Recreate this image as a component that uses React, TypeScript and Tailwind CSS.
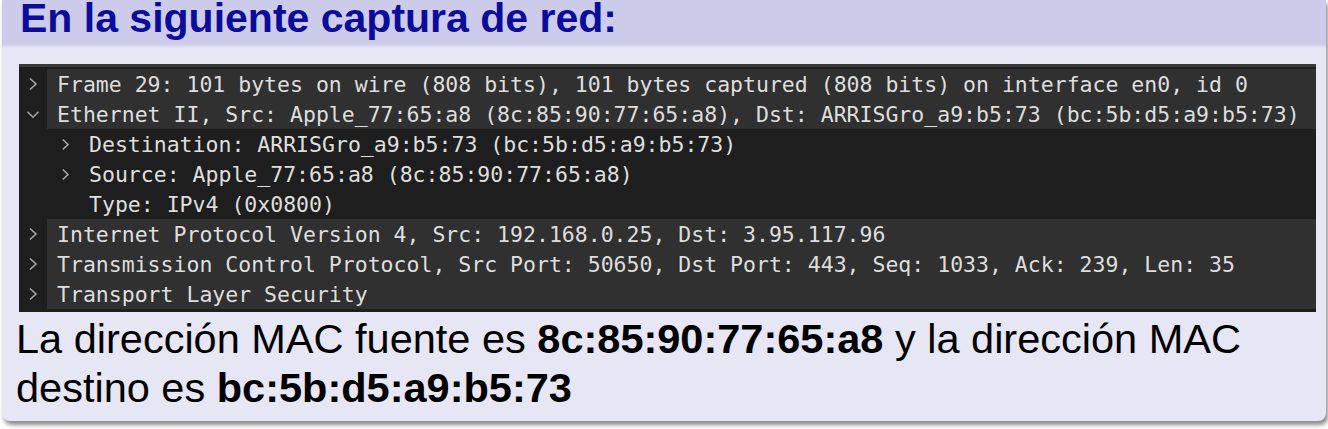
import React from "react";

const mono = { fontFamily: '"DejaVu Sans Mono", "Liberation Mono", monospace' };

function Right({ small = false }: { small?: boolean }) {
  return small ? (
    <svg width="9" height="13" viewBox="0 0 9 13" className="block">
      <path d="M1.8 1.5 L7 6.5 L1.8 11.5" stroke="#a6a6a6" strokeWidth="1.6" fill="none" />
    </svg>
  ) : (
    <svg width="10" height="14" viewBox="0 0 10 14" className="block">
      <path d="M2 1.5 L8 7 L2 12.5" stroke="#a6a6a6" strokeWidth="1.6" fill="none" />
    </svg>
  );
}

function Down() {
  return (
    <svg width="14" height="9" viewBox="0 0 14 9" className="block">
      <path d="M1.5 1.8 L7 7.2 L12.5 1.8" stroke="#a6a6a6" strokeWidth="1.6" fill="none" />
    </svg>
  );
}

function TopRow({ text, open = false }: { text: string; open?: boolean }) {
  return (
    <div className="flex h-[30px]">
      <div className="w-[28px] bg-[#1e1e1e] flex items-center justify-center">
        {open ? <Down /> : <Right />}
      </div>
      <div className="flex-1 bg-[#303030] pl-[10px] flex items-center">
        <span className="text-[21.5px] leading-[27px] text-[#dedede] whitespace-pre" style={mono}>
          {text}
        </span>
      </div>
    </div>
  );
}

function SubRow({ text, arrow = true }: { text: string; arrow?: boolean }) {
  return (
    <div className="flex h-[30px] items-center bg-[#1e1e1e] pl-[42px]">
      <div className="w-[9px]">{arrow ? <Right small /> : null}</div>
      <span className="ml-[19px] text-[21.5px] leading-[27px] text-[#dedede] whitespace-pre" style={mono}>
        {text}
      </span>
    </div>
  );
}

export default function App() {
  return (
    <div className="w-[1328px] h-[429px] bg-white overflow-hidden">
      <div className="ml-[2px] mr-[2px] rounded-b-[8px] bg-[#e6e6f4] shadow-[2px_4px_4px_rgba(0,0,0,0.45)]">
        <div className="h-[44px] bg-[#ccccea] pl-[18px]">
          <div
            className="text-[41px] leading-[36px] font-bold text-[#0c0c9c]"
            style={{ fontFamily: '"Liberation Sans", Arial, sans-serif' }}
          >
            En la siguiente captura de red:
          </div>
        </div>
        <div className="h-[4px] bg-gradient-to-b from-[#ccccea] to-[#e6e6f4]" />
        <div className="pt-[16px] pb-[9px]">
          <div className="ml-[17px] w-[1297px] bg-[#1e1e1e] border-t-[3px] border-[#3a3a3a] pt-[2px] pb-[3px]">
            <TopRow text="Frame 29: 101 bytes on wire (808 bits), 101 bytes captured (808 bits) on interface en0, id 0" />
            <TopRow
              open
              text="Ethernet II, Src: Apple_77:65:a8 (8c:85:90:77:65:a8), Dst: ARRISGro_a9:b5:73 (bc:5b:d5:a9:b5:73)"
            />
            <SubRow text="Destination: ARRISGro_a9:b5:73 (bc:5b:d5:a9:b5:73)" />
            <SubRow text="Source: Apple_77:65:a8 (8c:85:90:77:65:a8)" />
            <SubRow arrow={false} text="Type: IPv4 (0x0800)" />
            <TopRow text="Internet Protocol Version 4, Src: 192.168.0.25, Dst: 3.95.117.96" />
            <TopRow text="Transmission Control Protocol, Src Port: 50650, Dst Port: 443, Seq: 1033, Ack: 239, Len: 35" />
            <TopRow text="Transport Layer Security" />
          </div>
          <div
            className="mt-[2px] pl-[14px] text-[41.5px] leading-[49px] text-black"
            style={{ fontFamily: '"Liberation Sans", Arial, sans-serif' }}
          >
            La dirección MAC fuente es <span className="font-bold">8c:85:90:77:65:a8</span> y la dirección MAC
            <br />
            destino es <span className="font-bold">bc:5b:d5:a9:b5:73</span>
          </div>
        </div>
      </div>
    </div>
  );
}
